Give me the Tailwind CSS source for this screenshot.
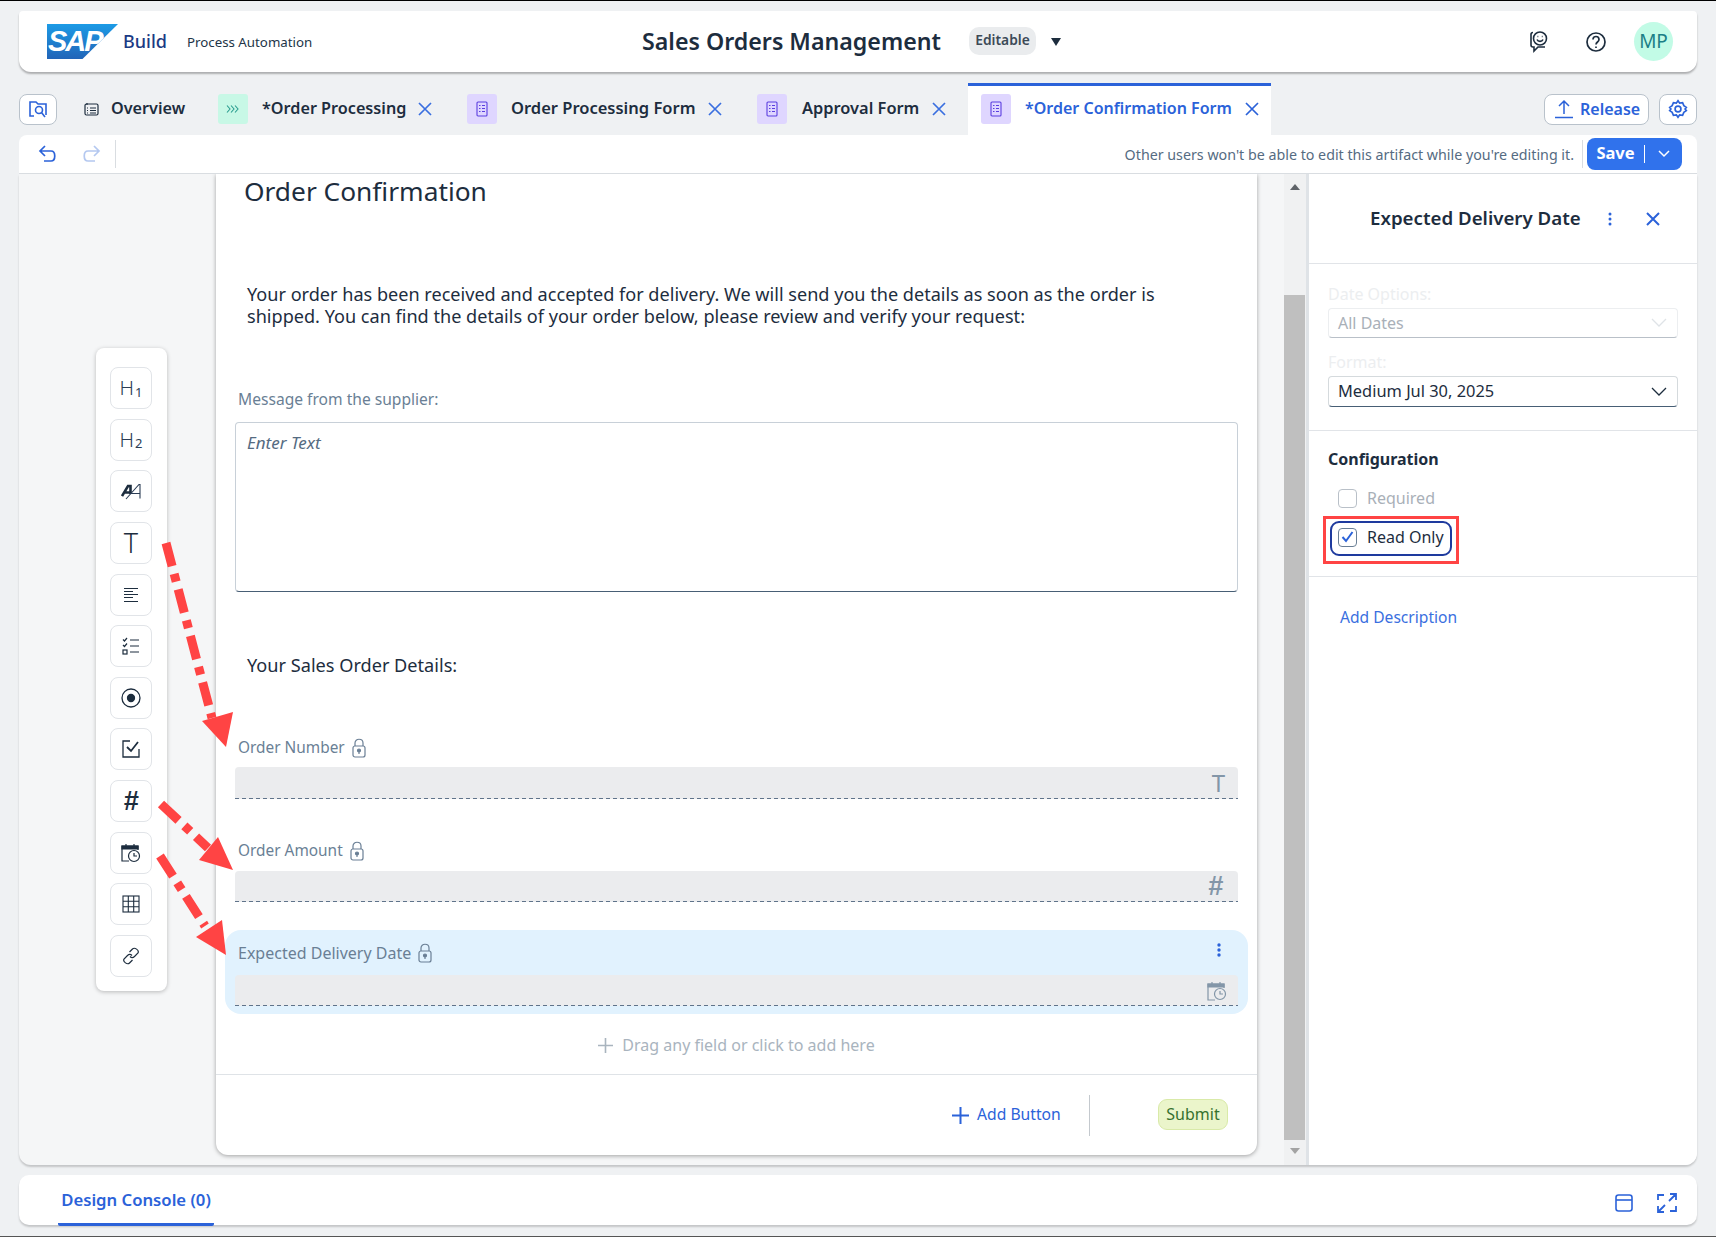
<!DOCTYPE html>
<html lang="en">
<head>
  <meta charset="UTF-8" />
  <title>Sales Orders Management</title>
  <script src="https://cdn.jsdelivr.net/npm/@tailwindcss/browser@4"></script>
</head>
<body class="bg-[#eff1f3] font-['Noto_Sans',sans-serif] text-[#1d2d3e] overflow-hidden">
<div class="relative w-[1716px] h-[1237px] flex flex-col border-t border-b border-t-black border-b-[#555] px-[19px] pt-[10px]">

  <!-- Shell bar -->
  <header class="h-[61px] shrink-0 bg-white rounded-t-[4px] rounded-b-[12px] shadow-[0_2px_2px_rgba(0,0,0,0.28)] flex items-center relative">
    <div class="ml-[28px] w-[71px] h-[35px] bg-linear-to-b from-[#1c9be6] to-[#2165b8] [clip-path:polygon(0_0,100%_0,50%_100%,0_100%)] pl-[1px] flex items-center text-white font-bold italic text-[29px] tracking-[-2px] font-['Liberation_Sans',sans-serif] leading-none">SAP</div>
    <span class="ml-[5px] text-[18px] font-medium text-[#1b3a84]">Build</span>
    <span class="ml-[20px] mt-[2px] text-[13.300px] text-[#223548]">Process Automation</span>
    <div class="absolute left-[623px] top-0 h-full flex items-center">
      <span class="text-[23.200px] font-semibold text-[#1d2d3e] w-[327px] mt-[-1px]">Sales Orders Management</span>
      <span class="h-[28px] w-[67px] bg-[#eaecee] rounded-[10px] flex items-center justify-center text-[13.800px] font-semibold text-[#3c4a57] mt-[-2px]">Editable</span>
      <svg class="ml-[15px] mt-[1px]" width="10" height="8" viewBox="0 0 10 8"><path d="M0 0h10L5 8z" fill="#1d2d3e"/></svg>
    </div>
    <div class="ml-auto flex items-center mr-[24px]">
      <svg width="22" height="24" viewBox="0 0 22 24" fill="none" stroke="#1d2d3e" stroke-width="1.6"><path d="M5 2.5c-1 0-2 1-2 2V15c0 1 1 2 2 2h1v4l4-4h7"/><circle cx="12" cy="8.5" r="6.5"/><path d="M9 9.5c1 2.5 5 2.5 6 0M9.5 6.5h.8M13.8 6.5h.8"/></svg>
      <svg class="ml-[35px]" width="22" height="22" viewBox="0 0 22 22" fill="none" stroke="#1d2d3e" stroke-width="1.7"><circle cx="11" cy="11" r="9"/><path d="M8 8.5c0-4 6-4 6 0 0 2.500-3 2.500-3 5"/><path d="M11 15.500v1.500"/></svg>
      <span class="ml-[27px] w-[39px] h-[39px] rounded-full bg-[#c2fbe6] text-[#1b7f86] text-[19px] flex items-center justify-center">MP</span>
    </div>
  </header>

  <!-- Tab strip -->
  <nav class="h-[63px] shrink-0 flex items-end relative">
    <div class="h-[52px] w-full flex items-center text-[16.400px] font-semibold text-[#1d2d3e]">
      <button class="w-[38px] h-[31px] bg-white border border-[#b9c2cb] rounded-[8px] flex items-center justify-center">
        <svg width="20" height="20" viewBox="0 0 20 20" fill="none" stroke="#2b62d9" stroke-width="1.6"><path d="M2 16V3h6l2 2h8v11"/><path d="M2 16v1h4"/><circle cx="11" cy="11" r="3.500"/><path d="M13.500 13.500 17 18"/></svg>
      </button>
      <svg class="ml-[27px]" width="15" height="14" viewBox="0 0 15 14" fill="none" stroke="#1d2d3e" stroke-width="1.200"><rect x="1" y="2" width="13" height="11" rx="1.500"/><path d="M3 1v2M6 6h6M6 8.500h6M6 11h6M3 6h1M3 8.500h1M3 11h1"/></svg>
      <span class="ml-[12px] w-[107px] mb-[2px] text-[16.200px]">Overview</span>
      <span class="w-[30px] h-[30px] rounded-[3px] bg-[#c8f8e6] text-[#1f8a7a] flex items-center justify-center">
        <svg width="14" height="10" viewBox="0 0 14 10" fill="none" stroke="#2a9d8f" stroke-width="1.100"><path d="M1 1.500 4 5 1 8.500M5 1.500 8 5 5 8.500M9 1.500 12 5 9 8.500"/></svg>
      </span>
      <span class="ml-[14px] w-[156px] whitespace-nowrap mb-[2px] text-[16.200px]">*Order Processing</span>
      <svg class="mr-[35px]" width="14" height="14" viewBox="0 0 14 14" fill="none" stroke="#3a6fe0" stroke-width="1.700"><path d="m1 1 12 12M13 1 1 13"/></svg>
      <span class="w-[30px] h-[30px] rounded-[3px] bg-[#dfd6ff] flex items-center justify-center">
        <svg width="12" height="16" viewBox="0 0 12 16" fill="none" stroke="#5b3fe0" stroke-width="1.100"><rect x="1" y="1" width="10" height="14" rx="1"/><path d="M3 4.500h1.500M6 4.500h3M3 7.500h1.500M6 7.500h3M3 10.500h1.500M6 10.500h3"/></svg>
      </span>
      <span class="ml-[14px] w-[197px] whitespace-nowrap mb-[2px] text-[16.500px]">Order Processing Form</span>
      <svg class="mr-[35px]" width="14" height="14" viewBox="0 0 14 14" fill="none" stroke="#3a6fe0" stroke-width="1.700"><path d="m1 1 12 12M13 1 1 13"/></svg>
      <span class="w-[30px] h-[30px] rounded-[3px] bg-[#dfd6ff] flex items-center justify-center">
        <svg width="12" height="16" viewBox="0 0 12 16" fill="none" stroke="#5b3fe0" stroke-width="1.100"><rect x="1" y="1" width="10" height="14" rx="1"/><path d="M3 4.500h1.500M6 4.500h3M3 7.500h1.500M6 7.500h3M3 10.500h1.500M6 10.500h3"/></svg>
      </span>
      <span class="ml-[15px] w-[130px] whitespace-nowrap mb-[2px]">Approval Form</span>
      <svg width="14" height="14" viewBox="0 0 14 14" fill="none" stroke="#3a6fe0" stroke-width="1.700"><path d="m1 1 12 12M13 1 1 13"/></svg>
      <div class="ml-[22px] w-[303px] h-[52px] bg-white border-t-[3px] border-[#2b62d9] flex items-center pl-[13px] pb-[3px] text-[#2b62d9]">
        <span class="w-[30px] h-[30px] rounded-[3px] bg-[#dfd6ff] flex items-center justify-center">
          <svg width="12" height="16" viewBox="0 0 12 16" fill="none" stroke="#5b3fe0" stroke-width="1.100"><rect x="1" y="1" width="10" height="14" rx="1"/><path d="M3 4.500h1.500M6 4.500h3M3 7.500h1.500M6 7.500h3M3 10.500h1.500M6 10.500h3"/></svg>
        </span>
        <span class="ml-[14px] w-[220px] whitespace-nowrap mb-[2px] text-[16px]">*Order Confirmation Form</span>
        <svg width="14" height="14" viewBox="0 0 14 14" fill="none" stroke="#2b62d9" stroke-width="1.700"><path d="m1 1 12 12M13 1 1 13"/></svg>
      </div>
      <button class="ml-auto w-[105px] h-[31px] bg-white border border-[#b9c2cb] rounded-[8px] flex items-center pl-[10px] text-[#2b62d9] text-[16px]">
        <svg width="18" height="20" viewBox="0 0 18 20" fill="none" stroke="#2b62d9" stroke-width="1.500"><path d="M9 15V2M4 7l5-5 5 5M0 18.500h18"/></svg>
        <span class="ml-[7px]">Release</span>
      </button>
      <button class="ml-[10px] w-[38px] h-[31px] bg-white border border-[#b9c2cb] rounded-[8px] flex items-center justify-center">
        <svg width="20" height="20" viewBox="0 0 24 24" fill="none" stroke="#2b62d9" stroke-width="2"><circle cx="12" cy="12" r="3.500"/><path d="M12 2l2 3 3.500-.5L19 8l3 2-1.500 2 1.500 2-3 2-1.500 3.500L14 19l-2 3-2-3-3.500.5L5 16l-3-2 1.500-2L2 10l3-2 1.500-3.500L10 5z"/></svg>
      </button>
    </div>
  </nav>

  <!-- Action toolbar -->
  <div class="h-[39px] shrink-0 bg-white rounded-t-[8px] border-b border-[#d9dde1] flex items-center">
    <svg class="ml-[19px]" width="20" height="20" viewBox="0 0 20 20" fill="none" stroke="#2b62d9" stroke-width="1.700"><path d="M7 2 2 7l5 5M2 7h11c5 0 5 10 0 10H6"/></svg>
    <svg class="ml-[23px]" width="20" height="20" viewBox="0 0 20 20" fill="none" stroke="#b4c8f0" stroke-width="1.700"><path d="m13 2 5 5-5 5M18 7H7c-5 0-5 10 0 10h7"/></svg>
    <span class="ml-[14px] w-px h-[28px] bg-[#d9dde1]"></span>
    <span class="ml-auto mt-[1px] text-[14.250px] text-[#556b82]">Other users won't be able to edit this artifact while you're editing it.</span>
    <span class="ml-[8px] w-px h-[28px] bg-[#d9dde1]"></span>
    <button class="ml-[4px] mr-[15px] w-[95px] h-[32px] rounded-[8px] bg-[#3072ec] text-white flex items-center font-bold text-[16.500px]">
      <span class="w-[57px] text-center mb-[2px]">Save</span>
      <span class="w-px h-[18px] bg-white"></span>
      <svg class="ml-[13px]" width="12" height="8" viewBox="0 0 12 8" fill="none" stroke="white" stroke-width="1.500"><path d="m1 1 5 5 5-5"/></svg>
    </button>
  </div>

  <!-- Work area -->
  <main class="h-[991px] shrink-0 flex bg-[#f5f6f7] rounded-b-[12px] shadow-[0_2px_2px_rgba(0,0,0,0.18)] overflow-hidden">
    <div class="w-[197px] shrink-0 pl-[77px] pt-[174px]">
      <div class="w-[71px] h-[643px] bg-white rounded-[8px] shadow-[0_1px_4px_rgba(0,0,0,0.25)] pt-[19px] px-[14px]">
        <div class="h-[610px] flex flex-col justify-between">
          <div class="w-[42px] h-[42px] rounded-[8px] border border-[#e1e4e8] flex items-center justify-center text-[20px] font-light leading-none text-[#2b3d55]">H<span class="text-[13px] ml-[1px] mt-[8px] font-normal">1</span></div>
          <div class="w-[42px] h-[42px] rounded-[8px] border border-[#e1e4e8] flex items-center justify-center text-[20px] font-light leading-none text-[#2b3d55]">H<span class="text-[13px] ml-[1px] mt-[8px] font-normal">2</span></div>
          <div class="w-[42px] h-[42px] rounded-[8px] border border-[#e1e4e8] flex items-center justify-center">
            <svg width="21" height="17" viewBox="0 0 21 17" fill="none" stroke="#1d2d3e"><path d="M1 13 7 3h2.500v8M4 9.500h5.500" stroke-width="2.600"/><path d="M5 16 18 1.500h1V15.500M10 10.500h9" stroke-width="1.100" stroke="#2b3d55"/></svg>
          </div>
          <div class="w-[42px] h-[42px] rounded-[8px] border border-[#e1e4e8] flex items-center justify-center text-[27px] font-light leading-none text-[#1d2d3e]">T</div>
          <div class="w-[42px] h-[42px] rounded-[8px] border border-[#e1e4e8] flex items-center justify-center">
            <svg width="16" height="16" viewBox="0 0 16 16" stroke="#1d2d3e" stroke-width="1.200"><path d="M1 1.500h14M1 4.500h9M1 7.500h14M1 10.500h9M1 14.500h14"/></svg>
          </div>
          <div class="w-[42px] h-[42px] rounded-[8px] border border-[#e1e4e8] flex items-center justify-center">
            <svg width="18" height="18" viewBox="0 0 18 18" fill="none" stroke="#1d2d3e" stroke-width="1.200"><path d="m1 2.500 1.500 1.500L5 1M1 8l1.500 1.500L5 6.500M8 3h9M8 9h9M8 15h9"/><rect x="1" y="13" width="4" height="4"/></svg>
          </div>
          <div class="w-[42px] h-[42px] rounded-[8px] border border-[#e1e4e8] flex items-center justify-center">
            <svg width="20" height="20" viewBox="0 0 20 20" fill="none" stroke="#1d2d3e" stroke-width="1.300"><circle cx="10" cy="10" r="9"/><circle cx="10" cy="10" r="3.500" fill="#1d2d3e"/></svg>
          </div>
          <div class="w-[42px] h-[42px] rounded-[8px] border border-[#e1e4e8] flex items-center justify-center">
            <svg width="18" height="18" viewBox="0 0 18 18" fill="none" stroke="#1d2d3e" stroke-width="1.300"><path d="M8 1H1v16h16V9"/><path d="m5 7 4 4 7-9" stroke-width="1.800"/></svg>
          </div>
          <div class="w-[42px] h-[42px] rounded-[8px] border border-[#e1e4e8] flex items-center justify-center text-[27px] font-bold italic leading-none text-[#1d2d3e] font-['Liberation_Sans',sans-serif]">#</div>
          <div class="w-[42px] h-[42px] rounded-[8px] border border-[#e1e4e8] flex items-center justify-center">
            <svg width="20" height="20" viewBox="0 0 20 20" fill="none" stroke="#1d2d3e" stroke-width="1.200"><path d="M8 18H1V3h16v4"/><path d="M1 3h16v3H1z" fill="#1d2d3e"/><path d="M5 1v3M13 1v3"/><circle cx="13" cy="13" r="5.500"/><path d="M13 10v3h3"/></svg>
          </div>
          <div class="w-[42px] h-[42px] rounded-[8px] border border-[#e1e4e8] flex items-center justify-center">
            <svg width="18" height="18" viewBox="0 0 18 18" fill="none" stroke="#1d2d3e" stroke-width="1.100"><rect x="1" y="1" width="16" height="16"/><path d="M1 6.300h16M1 11.700h16M6.300 1v16M11.700 1v16"/></svg>
          </div>
          <div class="w-[42px] h-[42px] rounded-[8px] border border-[#e1e4e8] flex items-center justify-center">
            <svg width="18" height="18" viewBox="0 0 18 18" fill="none" stroke="#1d2d3e" stroke-width="1.200"><path d="m7.500 5 3-3c2-2 7 1 5.500 4l-3.500 3.500c-1.500 1.500-3.500 1-4.500 0"/><path d="m10.500 13-3 3c-2 2-7-1-5.500-4l3.500-3.500c1.500-1.500 3.500-1 4.500 0"/></svg>
          </div>
        </div>
      </div>
    </div>

    <!-- Form canvas -->
    <section class="w-[1041px] h-[981px] shrink-0 bg-white rounded-b-[12px] shadow-[0_1px_4px_rgba(0,0,0,0.35)] relative flex flex-col">
      <div class="flex-1 pl-[20px] pr-[20px]">
        <h1 class="ml-[8px] mt-[-2px] text-[26.300px] leading-[38px] text-[#1d2d3e]">Order Confirmation</h1>
        <p class="ml-[11px] mt-[73px] w-[970px] text-[18.100px] leading-[22px] text-[#1d2d3e]">Your order has been received and accepted for delivery. We will send you the details as soon as the order is shipped. You can find the details of your order below, please review and verify your request:</p>
        <div class="ml-[2px] mt-[61px] text-[15.600px] leading-[22px] text-[#6a7f95]">Message from the supplier:</div>
        <div class="ml-[-1px] mt-[12px] h-[170px] w-[1003px] border border-[#c8d0d8] border-b-[#475e75] rounded-[4px] px-[11px] py-[7px] text-[17px] italic text-[#556b82]">Enter Text</div>
        <div class="ml-[11px] mt-[61px] text-[18.150px] leading-[24px] text-[#1d2d3e]">Your Sales Order Details:</div>

        <div class="ml-[2px] mt-[57px] h-[26px] pt-[2px] flex items-center text-[15.400px] text-[#6a7f95]">Order Number
          <svg class="ml-[7px]" width="14" height="20" viewBox="0 0 14 20" fill="none" stroke="#6a7f95" stroke-width="1.200"><rect x="1" y="8" width="12" height="11" rx="2"/><path d="M3 8V5c0-5 8-5 8 0v3"/><circle cx="7" cy="12.500" r="1.500" fill="#6a7f95"/><path d="M7 13v3"/></svg>
        </div>
        <div class="ml-[-1px] mt-[7px] w-[1003px] h-[32px] bg-[#ebecee] rounded-t-[4px] bg-[repeating-linear-gradient(to_right,#5f738a_0,#5f738a_4px,transparent_4px,transparent_7px)] bg-[length:100%_1px] bg-bottom bg-no-repeat flex items-center justify-end pr-[13px] text-[24px] leading-none text-[#8396a8]">T</div>

        <div class="ml-[2px] mt-[38px] h-[26px] pt-[2px] flex items-center text-[15.400px] text-[#6a7f95]">Order Amount
          <svg class="ml-[7px]" width="14" height="20" viewBox="0 0 14 20" fill="none" stroke="#6a7f95" stroke-width="1.200"><rect x="1" y="8" width="12" height="11" rx="2"/><path d="M3 8V5c0-5 8-5 8 0v3"/><circle cx="7" cy="12.500" r="1.500" fill="#6a7f95"/><path d="M7 13v3"/></svg>
        </div>
        <div class="ml-[-1px] mt-[8px] w-[1003px] h-[31px] bg-[#ebecee] rounded-t-[4px] bg-[repeating-linear-gradient(to_right,#5f738a_0,#5f738a_4px,transparent_4px,transparent_7px)] bg-[length:100%_1px] bg-bottom bg-no-repeat flex items-center justify-end pr-[15px] text-[27px] font-bold italic leading-none text-[#8396a8] font-['Liberation_Sans',sans-serif]">#</div>

        <div class="mt-[28px] ml-[-11px] w-[1023px] h-[84px] bg-[#e1f2fe] rounded-[16px] pl-[11px] pr-[11px] pt-[10px]">
          <div class="ml-[2px] h-[26px] flex items-center text-[16px] text-[#6a7f95]">Expected Delivery Date
            <svg class="ml-[7px]" width="14" height="20" viewBox="0 0 14 20" fill="none" stroke="#6a7f95" stroke-width="1.200"><rect x="1" y="8" width="12" height="11" rx="2"/><path d="M3 8V5c0-5 8-5 8 0v3"/><circle cx="7" cy="12.500" r="1.500" fill="#6a7f95"/><path d="M7 13v3"/></svg>
            <svg class="ml-auto mr-[16px] mt-[-6px]" width="4" height="14" viewBox="0 0 4 14" fill="#2b62d9"><circle cx="2" cy="2" r="1.700"/><circle cx="2" cy="7" r="1.700"/><circle cx="2" cy="12" r="1.700"/></svg>
          </div>
          <div class="ml-[-1px] mt-[9px] w-[1003px] h-[31px] bg-[#ebecee] rounded-t-[4px] bg-[repeating-linear-gradient(to_right,#5f738a_0,#5f738a_4px,transparent_4px,transparent_7px)] bg-[length:100%_1px] bg-bottom bg-no-repeat flex items-center justify-end pr-[11px]">
            <svg width="20" height="20" viewBox="0 0 20 20" fill="none" stroke="#8396a8" stroke-width="1.200"><path d="M8 19H1V3h16v4"/><path d="M1 3h16v3H1z" fill="#8396a8"/><path d="M5 1v3M13 1v3"/><circle cx="13" cy="13" r="5.500"/><path d="M13 10v3h3"/></svg>
          </div>
        </div>

        <div class="mt-[19px] h-[24px] flex items-center justify-center text-[16px] text-[#a9b4be] w-[1001px]">
          <svg class="mr-[9px]" width="15" height="15" viewBox="0 0 15 15" stroke="#a9b4be" stroke-width="1.600"><path d="M7.500 0v15M0 7.500h15"/></svg>Drag any field or click to add here
        </div>
      </div>
      <div class="h-[81px] shrink-0 border-t border-[#dfe3e7] flex items-center text-[16px]">
        <svg class="ml-[736px]" width="17" height="17" viewBox="0 0 17 17" stroke="#2b62d9" stroke-width="2"><path d="M8.500 0v17M0 8.500h17"/></svg>
        <span class="ml-[8px] w-[83px] whitespace-nowrap text-[#2b62d9] text-[15.700px]">Add Button</span>
        <span class="ml-[29px] w-px h-[41px] bg-[#c4c9ce]"></span>
        <button class="ml-[68px] mb-[2px] w-[70px] h-[31px] rounded-[9px] bg-[#ebf5cb] border border-[#d9eaa8] text-[#36712f]">Submit</button>
      </div>
    </section>

    <!-- Canvas scrollbar -->
    <div class="ml-[27px] w-[25px] shrink-0 h-full bg-[#f0f1f2] border-r-[3px] border-[#dfe3e7] flex flex-col items-start">
      <div class="h-[121px] w-[21px] flex justify-center pt-[10px]">
        <svg width="10" height="6" viewBox="0 0 10 6"><path d="M5 0l5 6H0z" fill="#5f6368"/></svg>
      </div>
      <div class="w-[21px] h-[845px] bg-[#bfbfbf]"></div>
      <div class="w-[21px] flex justify-center pt-[8px]">
        <svg width="10" height="6" viewBox="0 0 10 6"><path d="M0 0h10L5 6z" fill="#a3a3a3"/></svg>
      </div>
    </div>

    <!-- Properties panel -->
    <aside class="flex-1 bg-white flex flex-col">
      <div class="h-[90px] border-b border-[#e1e4e8] flex items-center pl-[61px]">
        <span class="w-[212px] whitespace-nowrap text-[18.700px] font-semibold">Expected Delivery Date</span>
        <svg class="ml-[26px]" width="4" height="14" viewBox="0 0 4 14" fill="#2b62d9"><circle cx="2" cy="2" r="1.500"/><circle cx="2" cy="7" r="1.500"/><circle cx="2" cy="12" r="1.500"/></svg>
        <svg class="ml-[34px]" width="14" height="14" viewBox="0 0 14 14" fill="none" stroke="#2b62d9" stroke-width="2"><path d="m1 1 12 12M13 1 1 13"/></svg>
      </div>
      <div class="h-[167px] border-b border-[#e1e4e8] pl-[19px]">
        <div class="mt-[19px] h-[22px] leading-[22px] text-[16px] text-[#eceef0]">Date Options:</div>
        <div class="mt-[3px] w-[350px] h-[30px] rounded-[4px] border border-[#eceef0] border-b-[#b9c0c8] flex items-center justify-between pl-[9px] pr-[10px] text-[16px] text-[#a9b0b8]">All Dates
          <svg width="16" height="10" viewBox="0 0 16 10" fill="none" stroke="#dfe3e7" stroke-width="1.300"><path d="m1 1 7 7 7-7"/></svg>
        </div>
        <div class="mt-[13px] h-[22px] leading-[22px] text-[16px] text-[#eceef0]">Format:</div>
        <div class="mt-[3px] w-[350px] h-[31px] rounded-[4px] border border-[#d5dadd] border-b-[#475e75] flex items-center justify-between pl-[9px] pr-[10px] text-[16.400px]">Medium Jul 30, 2025
          <svg width="16" height="10" viewBox="0 0 16 10" fill="none" stroke="#1d2d3e" stroke-width="1.300"><path d="m1 1 7 7 7-7"/></svg>
        </div>
      </div>
      <div class="h-[146px] border-b border-[#e1e4e8] pl-[19px]">
        <div class="mt-[16px] h-[24px] leading-[24px] text-[16px] font-bold">Configuration</div>
        <div class="mt-[16px] ml-[10px] h-[22px] flex items-center text-[16px] text-[#a9b0b8]">
          <span class="w-[19px] h-[19px] rounded-[4px] border border-[#b9c0c8]"></span>
          <span class="ml-[10px]">Required</span>
        </div>
        <div class="mt-[7px] ml-[-5px] w-[136px] h-[48px] border-[3px] border-[#ff4444] pt-[2px] pl-[4px]">
          <div class="w-[122px] h-[35px] border-2 border-[#1e3a9e] rounded-[9px] flex items-center pl-[6px] pb-[3px] text-[16px]">
            <span class="w-[19px] h-[19px] rounded-[4px] border border-[#6a7f95] flex items-center justify-center">
              <svg width="13" height="12" viewBox="0 0 13 12" fill="none" stroke="#2b62d9" stroke-width="2"><path d="m1.500 6 3.500 4 6.500-9"/></svg>
            </span>
            <span class="ml-[10px] whitespace-nowrap">Read Only</span>
          </div>
        </div>
      </div>
      <div class="ml-[31px] mt-[28px] h-[24px] leading-[24px] text-[15.600px] text-[#3a6fe0]">Add Description</div>
    </aside>
  </main>

  <!-- Design console -->
  <footer class="mt-[10px] h-[50px] shrink-0 bg-white rounded-[10px] shadow-[0_2px_2px_rgba(0,0,0,0.18)] flex items-start relative">
    <div class="ml-[39px] w-[156px] h-[51px] border-b-[3px] border-[#2b62d9] rounded-b-[2px] text-center text-[16.700px] font-semibold text-[#2b62d9] leading-[50px]">Design Console (0)</div>
    <div class="ml-auto mr-[20px] mt-[18px] flex items-center gap-[24px]">
      <svg width="18" height="18" viewBox="0 0 18 18" fill="none" stroke="#2b62d9" stroke-width="1.600"><rect x="1" y="1" width="16" height="16" rx="2.500"/><path d="M1 6h16"/></svg>
      <svg width="20" height="20" viewBox="0 0 20 20" fill="none" stroke="#2b62d9" stroke-width="1.800"><path d="M1 7V2h6M19 13v5h-6M12 8l6-6M13 1h6v6M8 12l-6 6M7 19H1v-6"/></svg>
    </div>
  </footer>

  <!-- Red annotation arrows -->
  <svg class="absolute left-0 top-[-1px] pointer-events-none" width="1716" height="1237" viewBox="0 0 1716 1237" fill="none">
    <path d="M166 543 L212 718" stroke="#ff4444" stroke-width="9" stroke-dasharray="24 8 8 8"/>
    <path d="M226 747 L202 721 L233 712 Z" fill="#ff4444"/>
    <path d="M161 804 L208 848" stroke="#ff4444" stroke-width="9" stroke-dasharray="24 8 8 8"/>
    <path d="M233 870 L199 860 L218 837 Z" fill="#ff4444"/>
    <path d="M160 856 L205 926" stroke="#ff4444" stroke-width="9" stroke-dasharray="24 8 8 8"/>
    <path d="M226 955 L196 937 L222 920 Z" fill="#ff4444"/>
  </svg>
</div>
</body>
</html>
